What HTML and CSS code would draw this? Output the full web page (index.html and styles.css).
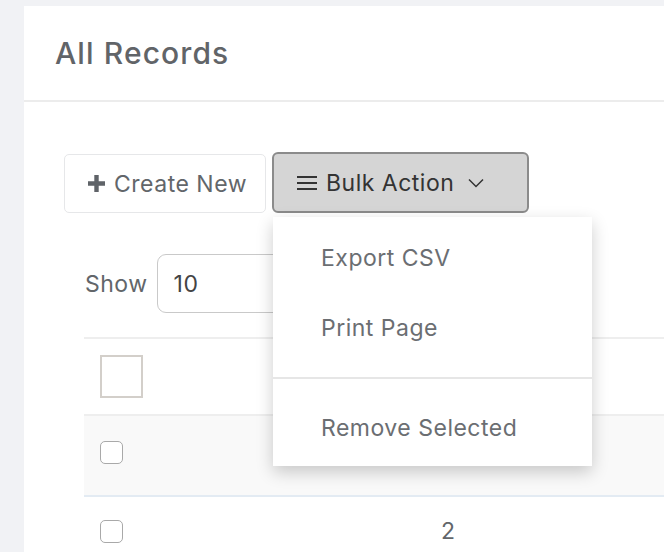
FILE: index.html
```html
<!DOCTYPE html>
<html>
<head>
<meta charset="utf-8">
<link rel="stylesheet" href="styles.css">
</head>
<body>
<div class="card">
  <div class="card-header"><h1 class="title">All Records</h1></div>
  <div class="card-body">
    <div class="toolbar">
      <button class="btn btn-create"><svg class="plus" width="19" height="19" viewBox="0 0 19 19"><path d="M9.5 1v17M1 9.5h17" stroke="#5f6368" stroke-width="4.4" fill="none"/></svg><span>Create New</span></button>
      <div class="bulk-wrap">
        <button class="btn btn-bulk"><svg class="burger" width="20" height="14" viewBox="0 0 20 14"><path d="M0 1h20M0 7h20M0 13h20" stroke="#333" stroke-width="2.2" fill="none"/></svg><span>Bulk Action</span><svg class="chev" width="16" height="10" viewBox="0 0 16 10"><path d="M1 1.5l7 7 7-7" stroke="#333" stroke-width="1.5" fill="none"/></svg></button>
        <div class="menu">
          <div class="menu-item">Export CSV</div>
          <div class="menu-item">Print Page</div>
          <div class="menu-divider"></div>
          <div class="menu-item">Remove Selected</div>
        </div>
      </div>
    </div>
    <div class="show-row">
      <span class="show-label">Show</span>
      <div class="select">10</div>
    </div>
    <div class="table">
      <div class="row row-head">
        <div class="cell-check"><span class="check-big"></span></div>
        <div class="cell-num">#</div>
      </div>
      <div class="row row-odd">
        <div class="cell-check"><span class="check"></span></div>
        <div class="cell-num">1</div>
      </div>
      <div class="row row-last">
        <div class="cell-check"><span class="check"></span></div>
        <div class="cell-num">2</div>
      </div>
    </div>
  </div>
</div>
</body>
</html>
```
FILE: styles.css
```css
* { box-sizing: border-box; }
html, body { margin: 0; padding: 0; }
body {
  background: #f1f2f5;
  font-family: Inter, "Noto Sans", sans-serif;
  overflow: hidden;
  width: 664px;
  height: 552px;
}
.card {
  margin: 6px 0 0 24px;
  background: #fff;
  width: 640px;
  height: 546px;
  overflow: hidden;
}
.card-header {
  height: 96px;
  padding-left: 31px;
  display: flex;
  align-items: center;
  border-bottom: 2px solid #ececec;
}
.title {
  margin: 0;
  font-size: 30px;
  font-weight: 500;
  color: #616468;
  letter-spacing: 1.1px;
}
.card-body {
  padding: 50px 0 0 40px;
}
.toolbar {
  display: flex;
  align-items: flex-end;
  gap: 6px;
  height: 61px;
}
.btn {
  font-family: inherit;
  display: flex;
  align-items: center;
  font-size: 23px;
  letter-spacing: 0.5px;
  cursor: pointer;
  margin: 0;
}
.btn-create {
  width: 202px;
  height: 59px;
  padding: 0 0 0 22px;
  background: #fff;
  border: 1.5px solid #e6e7e9;
  border-radius: 5px;
  color: #62666a;
  gap: 8px;
}
.plus { display: block; }
.bulk-wrap { position: relative; }
.btn-bulk {
  width: 257px;
  height: 61px;
  padding: 0 0 0 23px;
  background: #d5d5d5;
  border: 2px solid #8b8b8b;
  border-radius: 6px;
  color: #333;
}
.burger { display: block; margin-right: 9px; }
.chev { display: block; margin-left: 14px; }
.menu {
  position: absolute;
  top: 65px;
  left: 1px;
  width: 319px;
  background: #fff;
  box-shadow: 0 6px 16px rgba(0, 0, 0, 0.2);
  padding: 6px 0 3px;
  z-index: 5;
}
.menu-item {
  height: 70px;
  display: flex;
  align-items: center;
  padding-left: 48px;
  font-size: 23px;
  letter-spacing: 0.5px;
  color: #6b6e72;
}
.menu-divider {
  height: 2px;
  background: #e6e6e6;
  margin: 14px 0;
}
.show-row {
  display: flex;
  align-items: center;
  margin-top: 41px;
  margin-left: 21px;
  height: 59px;
}
.show-label {
  font-size: 23px;
  letter-spacing: 0.5px;
  color: #62666a;
  margin-right: 9px;
}
.select {
  width: 220px;
  height: 59px;
  border: 1.5px solid #c9c9c9;
  border-radius: 9px;
  display: flex;
  align-items: center;
  padding-left: 16px;
  font-size: 23px;
  letter-spacing: 0.5px;
  color: #444;
}
.table {
  margin: 24px 0 0 20px;
  width: 580px;
  border-top: 2px solid #eeeeee;
}
.row {
  display: flex;
  align-items: center;
  height: 80px;
}
.row-head {
  height: 77px;
  border-bottom: 2px solid #eeeeee;
}
.row-odd {
  background: #f9f9f9;
  border-bottom: 2px solid #e3ebf3;
  height: 81px;
}
.row-last { height: 68px; }
.cell-check {
  width: 200px;
  padding-left: 16px;
  display: flex;
  align-items: center;
}
.cell-num {
  width: 328px;
  text-align: center;
  font-size: 23px;
  color: #62666a;
}
.check-big {
  display: block;
  width: 43px;
  height: 43px;
  border: 2px solid #d3cfca;
  background: #fff;
}
.check {
  display: block;
  width: 23px;
  height: 23px;
  border: 1px solid #a9a9a9;
  border-radius: 5px;
  background: #fff;
}
.row-odd .check { margin-top: -6px; }
```
